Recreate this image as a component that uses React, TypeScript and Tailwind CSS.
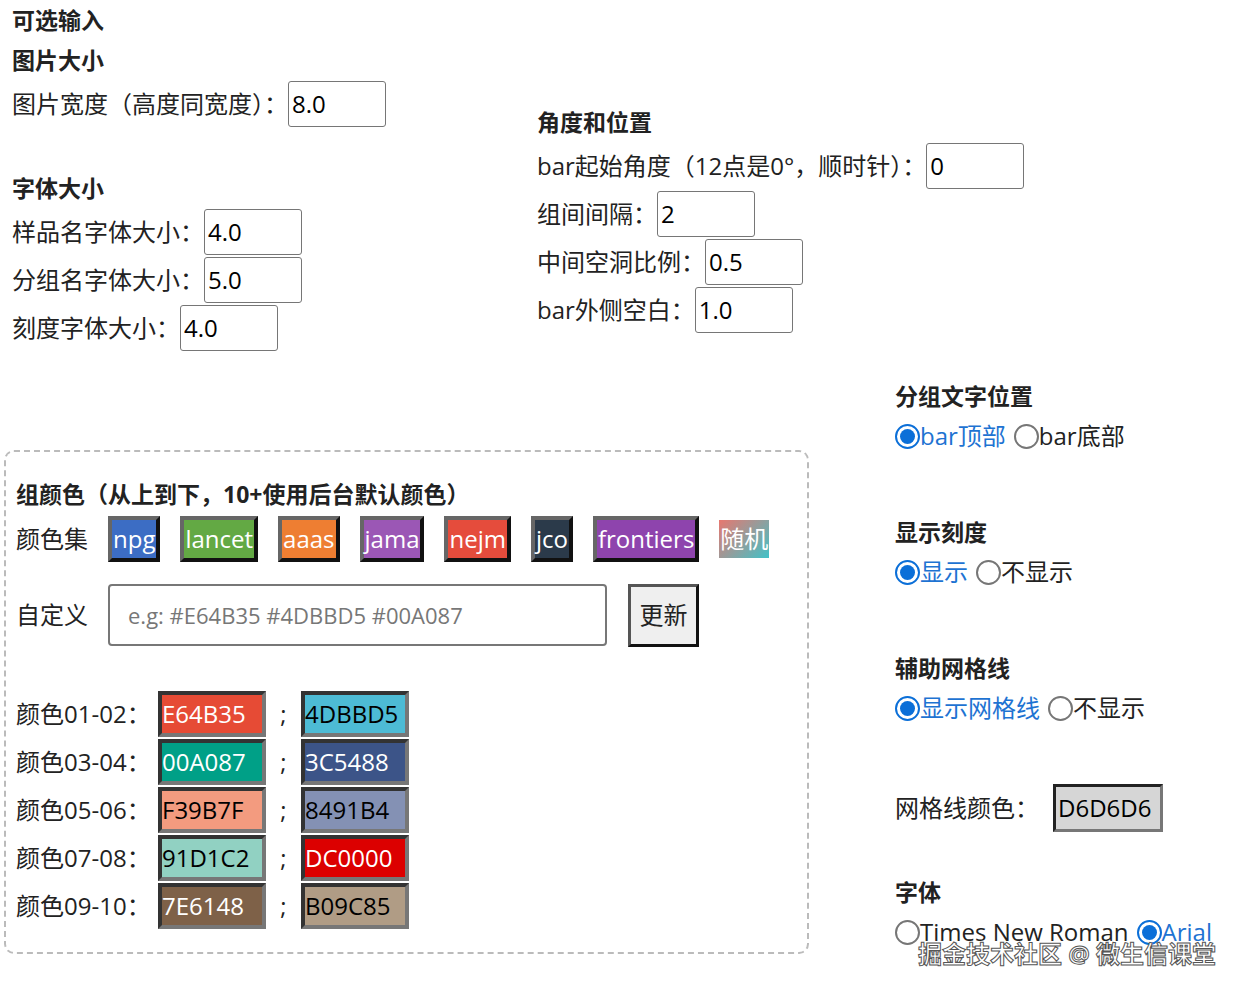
const F = { fontFamily: '"Open Sans", "Noto Sans CJK SC", sans-serif' };

function Inp({ v, w = 'w-[98px]' }: { v: string; w?: string }) {
  return (
    <div className={`${w} h-[46px] border border-[#767676] rounded-[3px] flex items-center px-[3px] text-[24px] text-black bg-white`}>{v}</div>
  );
}

function Row({ label, v }: { label: string; v: string }) {
  return (
    <div className="flex items-center h-[48px] whitespace-nowrap">
      <span>{label}</span>
      <Inp v={v} />
    </div>
  );
}

function H({ children, cls = '' }: { children: React.ReactNode; cls?: string }) {
  return <div className={`font-bold text-[23px] leading-[40px] text-[#222] whitespace-nowrap ${cls}`}>{children}</div>;
}

function Radio({ on, label }: { on: boolean; label: string }) {
  return (
    <span className={`inline-flex items-center ${on ? 'text-[#1e73d2]' : 'text-[#222]'}`}>
      {on ? (
        <span className="w-[25px] h-[25px] rounded-full border-[2px] border-[#0b6fd8] flex items-center justify-center">
          <span className="w-[15px] h-[15px] rounded-full bg-[#0b6fd8]" />
        </span>
      ) : (
        <span className="w-[25px] h-[25px] rounded-full border-[2px] border-[#767676]" />
      )}
      <span>{label}</span>
    </span>
  );
}

function Sw({ bg, t, dark }: { bg: string; t: string; dark?: boolean }) {
  return (
    <div
      className={`w-[108px] h-[46px] border-[4px] border-t-[#333] border-l-[#333] border-b-[#777] border-r-[#777] flex items-center text-[24px] leading-none ${dark ? 'text-black' : 'text-white'}`}
      style={{ background: bg }}
    >
      {t}
    </div>
  );
}

function Pal({ bg, t }: { bg: string; t: string }) {
  return (
    <div
      className="h-[46px] border-[4px] border-t-[#666] border-l-[#666] border-b-[#111] border-r-[#111] flex items-center text-white text-[24px] leading-none px-[1px]"
      style={{ background: bg }}
    >
      {t}
    </div>
  );
}

export default function App() {
  const colors: [string, string, boolean, string, string, boolean][] = [
    ['01-02', '#E64B35', false, '#4DBBD5', '4DBBD5', true],
    ['03-04', '#00A087', false, '#3C5488', '3C5488', false],
    ['05-06', '#F39B7F', true, '#8491B4', '8491B4', true],
    ['07-08', '#91D1C2', true, '#DC0000', 'DC0000', false],
    ['09-10', '#7E6148', false, '#B09C85', 'B09C85', true],
  ];
  return (
    <div style={F} className="relative w-[1254px] h-[994px] bg-white text-[24px] text-[#222] overflow-hidden">
      <div className="flex">
        <div className="w-[880px] shrink-0">
          <div className="flex">
            <div className="w-[537px] shrink-0 pl-[12px]">
              <H>可选输入</H>
              <H>图片大小</H>
              <Row label="图片宽度（高度同宽度）：" v="8.0" />
              <div className="h-[40px]" />
              <H>字体大小</H>
              <Row label="样品名字体大小：" v="4.0" />
              <Row label="分组名字体大小：" v="5.0" />
              <Row label="刻度字体大小：" v="4.0" />
            </div>
            <div className="pt-[102px]">
              <H>角度和位置</H>
              <Row label="bar起始角度（12点是0°，顺时针）：" v="0" />
              <Row label="组间间隔：" v="2" />
              <Row label="中间空洞比例：" v="0.5" />
              <Row label="bar外侧空白：" v="1.0" />
            </div>
          </div>
          <div className="mt-[98px] ml-[4px] w-[805px] h-[504px] border-[2px] border-dashed border-[#bbb] rounded-[10px] pl-[10px] pt-[22px]">
            <H>组颜色（从上到下，10+使用后台默认颜色）</H>
            <div className="flex items-center gap-[20px] h-[50px]">
              <span>颜色集</span>
              <Pal bg="#3C6DC4" t="npg" />
              <Pal bg="#63A944" t="lancet" />
              <Pal bg="#EE7E32" t="aaas" />
              <Pal bg="#9B57B5" t="jama" />
              <Pal bg="#E54C3C" t="nejm" />
              <Pal bg="#2B3A4A" t="jco" />
              <Pal bg="#8E44AD" t="frontiers" />
              <div className="h-[38px] flex items-center text-white text-[24px] leading-none px-[1px]" style={{ background: 'linear-gradient(135deg,#e8776f,#41c2c8)' }}>随机</div>
            </div>
            <div className="flex items-center mt-[20px] h-[62px]">
              <span className="w-[92px]">自定义</span>
              <div className="w-[499px] h-[62px] border-[2px] border-[#777] rounded-[4px] flex items-center pl-[18px] text-[#777] text-[22px]">e.g: #E64B35 #4DBBD5 #00A087</div>
              <div className="ml-[21px] w-[71px] h-[63px] border-[3px] border-t-[#555] border-l-[#555] border-b-[#111] border-r-[#111] bg-[#efefef] flex items-center justify-center">更新</div>
            </div>
            <div className="mt-[45px] flex flex-col gap-[2px]">
              {colors.map(([n, b1, d1, b2, t2, d2]) => (
                <div key={n} className="flex items-center h-[46px]">
                  <span className="w-[142px] whitespace-nowrap">颜色{n}：</span>
                  <Sw bg={b1} t={b1.slice(1)} dark={d1} />
                  <span className="w-[35px] text-center">;</span>
                  <Sw bg={b2} t={t2} dark={d2} />
                </div>
              ))}
            </div>
          </div>
        </div>
        <div className="pt-[376px] pl-[15px] whitespace-nowrap">
          <H>分组文字位置</H>
          <div className="flex gap-[8px] h-[40px] items-center"><Radio on label="bar顶部" /><Radio on={false} label="bar底部" /></div>
          <H cls="mt-[56px]">显示刻度</H>
          <div className="flex gap-[8px] h-[40px] items-center"><Radio on label="显示" /><Radio on={false} label="不显示" /></div>
          <H cls="mt-[56px]">辅助网格线</H>
          <div className="flex gap-[8px] h-[40px] items-center"><Radio on label="显示网格线" /><Radio on={false} label="不显示" /></div>
          <div className="flex items-center mt-[56px] h-[48px]">
            <span>网格线颜色：</span>
            <div className="ml-[14px] w-[110px] h-[48px] border-[3px] border-t-[#222] border-l-[#222] border-b-[#777] border-r-[#777] bg-[#D6D6D6] flex items-center px-[2px] text-black">D6D6D6</div>
          </div>
          <H cls="mt-[40px]">字体</H>
          <div className="flex gap-[8px] h-[40px] items-center"><Radio on={false} label="Times New Roman" /><Radio on label="Arial" /></div>
        </div>
      </div>
      <div className="absolute left-[918px] top-[936px] text-[24px] text-white font-bold" style={{ WebkitTextStroke: '1px #555' }}>掘金技术社区 @ 微生信课堂</div>
    </div>
  );
}
